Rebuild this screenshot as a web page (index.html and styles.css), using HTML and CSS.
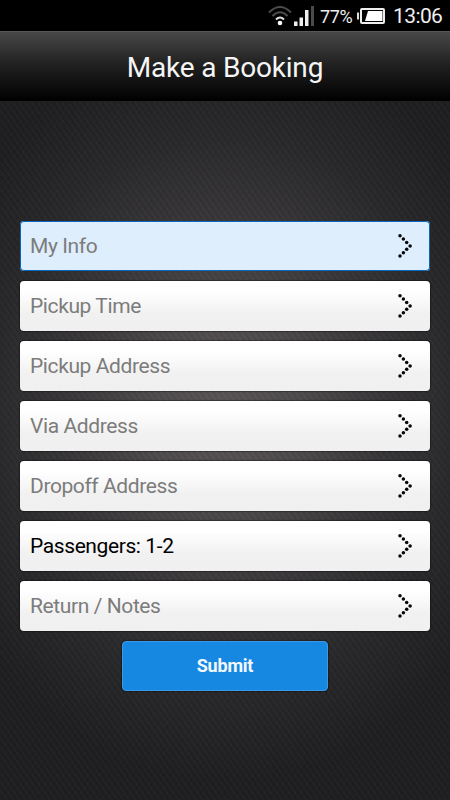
FILE: index.html
```html
<!DOCTYPE html>
<html lang="en">
<head>
<meta charset="utf-8">
<title>Make a Booking</title>
<link rel="stylesheet" href="styles.css">
</head>
<body>
<svg class="defs" aria-hidden="true">
  <symbol id="chevron" viewBox="0 0 16 26">
    <g fill="#080808">
      <circle cx="3" cy="2.7" r="1.75"/><circle cx="6.4" cy="6.1" r="1.75"/><circle cx="9.7" cy="9.5" r="1.75"/>
      <circle cx="13.1" cy="12.9" r="1.75"/>
      <circle cx="9.7" cy="16.3" r="1.75"/><circle cx="6.4" cy="19.7" r="1.75"/><circle cx="3" cy="23.1" r="1.75"/>
    </g>
  </symbol>
</svg>
<div class="statusbar">
  <svg class="wifi" viewBox="0 0 24 21" fill="none" stroke-width="2">
    <path stroke="#4a4a4a" d="M1 7.5Q12-3.5 23 7.5"/>
    <path stroke="#4a4a4a" d="M4.5 11Q12 3.5 19.500 11"/>
    <path stroke="#ddd" d="M8 14.500Q12 10.500 16 14.500"/>
    <circle cx="12" cy="18" r="2.3" fill="#fff"/>
  </svg>
  <svg class="signal" viewBox="0 0 20 20">
    <path fill="#eee" d="M0 15.500h3.500v4.500H0zM5.500 11.500h3.500v8.500H5.500zM11 4h3.500v16H11z"/>
    <path fill="#4a4a4a" d="M17 0h3v20h-3z"/>
  </svg>
  <span class="percent">77%</span>
  <svg class="battery" viewBox="0 0 28 16">
    <path fill="#ddd" d="M0 4.500h2v7H0z"/>
    <rect x="4" y="1" width="23" height="14" rx="1" fill="#050505" stroke="#eee" stroke-width="2"/>
    <path fill="#fff" d="M11 3h14.500v10H8z"/>
  </svg>
  <span class="clock">13:06</span>
</div>
<header class="header"><h1 class="title">Make a Booking</h1></header>
<main class="booking">
  <div class="row row-active"><span>My Info</span><svg class="chevron"><use href="#chevron"/></svg></div>
  <div class="row"><span>Pickup Time</span><svg class="chevron"><use href="#chevron"/></svg></div>
  <div class="row"><span>Pickup Address</span><svg class="chevron"><use href="#chevron"/></svg></div>
  <div class="row"><span>Via Address</span><svg class="chevron"><use href="#chevron"/></svg></div>
  <div class="row"><span>Dropoff Address</span><svg class="chevron"><use href="#chevron"/></svg></div>
  <div class="row row-filled"><span>Passengers: 1-2</span><svg class="chevron"><use href="#chevron"/></svg></div>
  <div class="row"><span>Return / Notes</span><svg class="chevron"><use href="#chevron"/></svg></div>
  <button class="submit">Submit</button>
</main>
</body>
</html>
```
FILE: styles.css
```css
* { box-sizing: border-box; }
body {
  margin: 0;
  width: 450px;
  height: 800px;
  overflow: hidden;
  display: flex;
  flex-direction: column;
  font-family: Roboto, sans-serif;
  background: #1b1b1d;
}
.defs { display: none; }
.statusbar {
  height: 31px;
  flex: none;
  display: flex;
  align-items: center;
  justify-content: flex-end;
  padding-right: 7px;
  background: #000;
  color: #eee;
}
.wifi { width: 24px; height: 21px; margin-right: 2px; }
.signal { width: 20px; height: 20px; margin-right: 6px; }
.percent { width: 33px; padding-top: 2px; font-size: 18px; letter-spacing: -.4px; white-space: nowrap; }
.battery { width: 28px; height: 16px; margin: 0 8px 0 4px; }
.clock { width: 50px; padding-top: 2px; font-size: 21px; line-height: 29px; letter-spacing: -.6px; white-space: nowrap; }
.header {
  height: 70px;
  flex: none;
  display: flex;
  align-items: center;
  justify-content: center;
  border-top: 1px solid #585858;
  background: linear-gradient(#484848, #222 45%, #000);
}
.title {
  margin: 2px 0 0;
  color: #f5f5f5;
  font-size: 28px;
  font-weight: 400;
  line-height: 34px;
  letter-spacing: -.2px;
}
.booking {
  flex: 1;
  display: flex;
  flex-direction: column;
  align-items: center;
  gap: 10px;
  padding: 119.5px 20px 0;
  background:
    repeating-linear-gradient(55deg, rgba(255,255,255,.012) 0 2px, rgba(0,0,0,.05) 2px 5px),
    repeating-linear-gradient(-55deg, rgba(255,255,255,.008) 0 2px, transparent 2px 5px),
    radial-gradient(ellipse 310px 370px at 225px 310px, #5a5657 0, #4f4c4d 25%, #3a383a 50%, #29282a 75%, #1f1f21 100%);
}
.row {
  width: 410px;
  height: 50px;
  flex: none;
  display: flex;
  align-items: center;
  justify-content: space-between;
  padding: 0 17px 0 10px;
  border-radius: 4px;
  background: linear-gradient(#fff 20%, #f1f1f1 65%, #f0f0f0);
  box-shadow: 0 0 1px 1px rgba(0,0,0,.35);
  color: #7c7c7c;
  font-size: 21px;
  line-height: 28px;
  letter-spacing: -.4px;
}
.row-active { background: #deeefc; box-shadow: inset 0 0 0 1px #0868bd; }
.row-filled { color: #000; }
.chevron { width: 16px; height: 26px; }
.submit {
  width: 206px;
  height: 50px;
  padding: 0;
  border: 1px solid #3a9ae8;
  border-radius: 4px;
  background: #1688e2;
  box-shadow: 0 0 1px 1px rgba(0,0,0,.3);
  color: #f3f8ff;
  font-family: inherit;
  font-size: 18px;
  font-weight: 700;
  letter-spacing: -.2px;
}
```
